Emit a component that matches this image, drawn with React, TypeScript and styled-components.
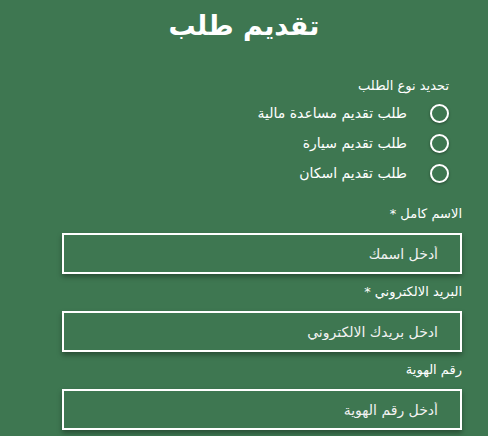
import React from 'react';
import styled, { createGlobalStyle } from 'styled-components';

const GlobalStyle = createGlobalStyle`
  html, body {
    margin: 0;
    padding: 0;
    background: #3e7751;
  }
  body {
    font-family: 'DejaVu Sans', 'Noto Sans', sans-serif;
    color: #ffffff;
  }
`;

const Page = styled.div`
  min-height: 436px;
  background: #3e7751;
  direction: rtl;
  padding-top: 6px;
  box-sizing: border-box;
  overflow: hidden;
`;

const Title = styled.h1`
  margin: 0;
  font-size: 27px;
  line-height: 40px;
  font-weight: bold;
  text-align: center;
  color: #ffffff;
`;

const Form = styled.form`
  width: 400px;
  margin: 30px 26px 0 auto;
  display: flex;
  flex-direction: column;
`;

const RadioGroup = styled.div`
  display: flex;
  flex-direction: column;
  padding-right: 13px;
  margin-bottom: 16px;
`;

const GroupTitle = styled.div`
  font-size: 13px;
  line-height: 20px;
  margin-bottom: 2px;
`;

const RadioRow = styled.label`
  display: flex;
  align-items: center;
  gap: 23px;
  height: 30px;
  font-size: 14px;
`;

const RadioInput = styled.input`
  appearance: none;
  margin: 0;
  width: 19px;
  height: 19px;
  border: 2px solid #ffffff;
  border-radius: 50%;
  background: transparent;
  box-shadow: 0 1px 3px rgba(0, 0, 0, 0.35);
  box-sizing: border-box;
`;

const Field = styled.div`
  display: flex;
  flex-direction: column;
  margin-bottom: 8px;
`;

const Label = styled.label`
  font-size: 13px;
  line-height: 20px;
  margin-bottom: 9px;
`;

const TextInput = styled.input`
  width: 400px;
  height: 41px;
  box-sizing: border-box;
  border: 2px solid #ffffff;
  background: transparent;
  padding: 0 22px;
  font-family: 'DejaVu Sans', 'Noto Sans', sans-serif;
  font-size: 14px;
  color: #ffffff;
  direction: rtl;
  box-shadow: 0 3px 5px rgba(0, 0, 0, 0.35);
  outline: none;

  &::placeholder {
    color: #f2f2f2;
    opacity: 1;
  }
`;

const types = ['طلب تقديم مساعدة مالية', 'طلب تقديم سيارة', 'طلب تقديم اسكان'];

const fields = [
  { id: 'name', label: 'الاسم كامل *', placeholder: 'أدخل اسمك' },
  { id: 'email', label: 'البريد الالكتروني *', placeholder: 'ادخل بريدك الالكتروني' },
  { id: 'nid', label: 'رقم الهوية', placeholder: 'أدخل رقم الهوية' },
];

export default function App() {
  return (
    <Page>
      <GlobalStyle />
      <Title>تقديم طلب</Title>
      <Form onSubmit={(e) => e.preventDefault()}>
        <RadioGroup>
          <GroupTitle>تحديد نوع الطلب</GroupTitle>
          {types.map((t) => (
            <RadioRow key={t}>
              <RadioInput type="radio" name="type" />
              <span>{t}</span>
            </RadioRow>
          ))}
        </RadioGroup>
        {fields.map((f) => (
          <Field key={f.id}>
            <Label htmlFor={f.id}>{f.label}</Label>
            <TextInput id={f.id} type="text" placeholder={f.placeholder} />
          </Field>
        ))}
      </Form>
    </Page>
  );
}
